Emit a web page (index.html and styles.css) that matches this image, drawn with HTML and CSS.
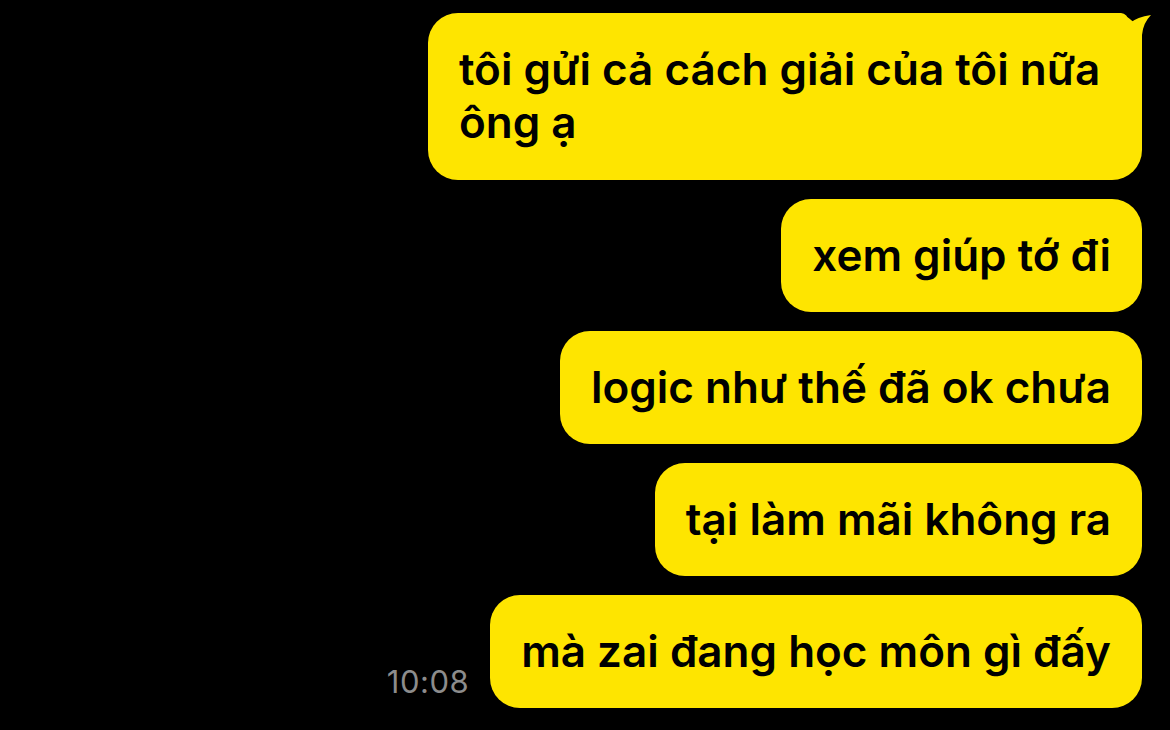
FILE: index.html
```html
<!DOCTYPE html>
<html lang="vi">
<head>
<meta charset="utf-8">
<title>Chat</title>
<link rel="stylesheet" href="styles.css">
</head>
<body>
<div class="chat">
  <div class="row">
    <div class="bubble bubble-first">
      tôi gửi cả cách giải của tôi nữa ông ạ
      <svg class="tail" width="44" height="40" viewBox="0 0 44 40"><path d="M0 0 L11 0 Q17 0 20 10 Q27 4 41 2 Q33 10 32 22 L32 40 L0 40 Z" fill="#FEE500"/></svg>
    </div>
  </div>
  <div class="row"><div class="bubble">xem giúp tớ đi</div></div>
  <div class="row"><div class="bubble">logic như thế đã ok chưa</div></div>
  <div class="row"><div class="bubble">tại làm mãi không ra</div></div>
  <div class="row">
    <span class="time">10:08</span>
    <div class="bubble">mà zai đang học môn gì đấy</div>
  </div>
</div>
</body>
</html>
```
FILE: styles.css
```css
html, body {
  margin: 0;
  padding: 0;
  background: #000;
}
body {
  width: 1170px;
  height: 730px;
  overflow: hidden;
  font-family: Inter, "Noto Sans", sans-serif;
}
.chat {
  display: flex;
  flex-direction: column;
  align-items: flex-end;
  gap: 19px;
  padding: 13px 28px 0 0;
}
.row {
  display: flex;
  align-items: flex-end;
  gap: 21px;
}
.bubble {
  position: relative;
  box-sizing: border-box;
  background: #FEE500;
  color: #000;
  font-size: 44px;
  font-weight: 600;
  line-height: 53px;
  padding: 30px 31px;
  border-radius: 30px;
  white-space: nowrap;
}
.bubble-first {
  white-space: normal;
  width: 714px;
  padding-bottom: 31px;
}
.tail {
  position: absolute;
  top: 0;
  right: -12px;
  display: block;
}
.time {
  color: #8c8c8c;
  font-size: 31px;
  font-weight: 400;
  letter-spacing: 0.5px;
  line-height: 1;
  padding-bottom: 11px;
}
```
